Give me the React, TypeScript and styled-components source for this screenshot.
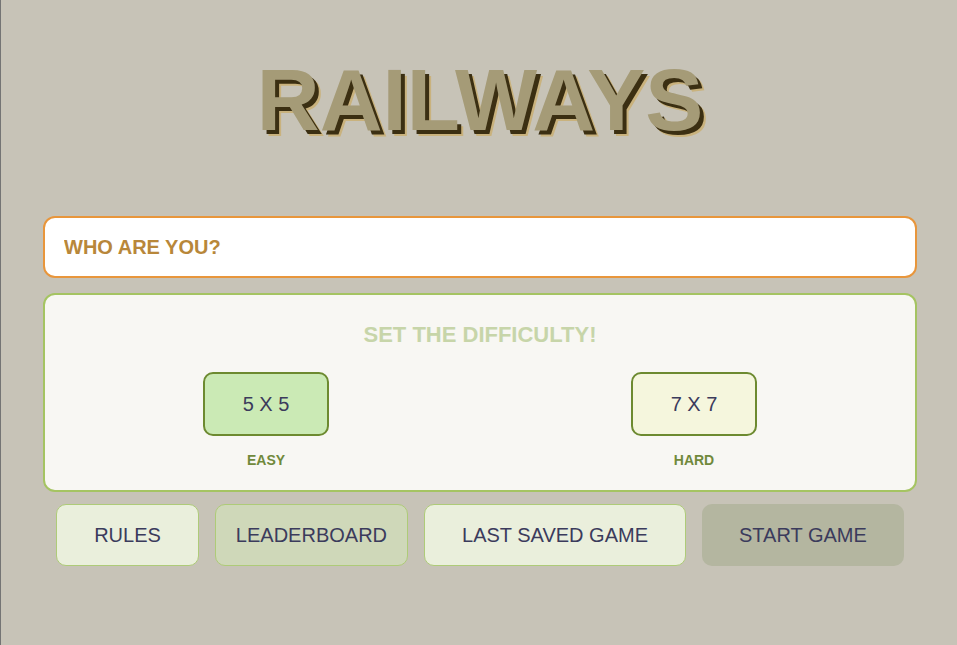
import styled, { createGlobalStyle } from "styled-components";

const GlobalStyle = createGlobalStyle`
  html, body {
    margin: 0;
    padding: 0;
    background: #c7c3b7;
  }
  * {
    box-sizing: border-box;
  }
`;

const Page = styled.div`
  min-height: 100vh;
  border-left: 1px solid #747474;
  padding: 57px 40px 0 42px;
  font-family: "Liberation Sans", Arial, sans-serif;
  display: flex;
  flex-direction: column;
`;

const Title = styled.h1`
  margin: 0;
  font-size: 87px;
  line-height: 86px;
  font-weight: 700;
  text-align: center;
  color: #a59b77;
  text-shadow: 4px 4px 0 #3b2f12, 6px 6px 0 #c9b27d;
`;

const NameInput = styled.input`
  margin-top: 73px;
  width: 100%;
  height: 62px;
  border: 2px solid #e8963c;
  border-radius: 12px;
  background: #ffffff;
  padding: 0 19px;
  font-family: inherit;
  font-size: 20px;
  font-weight: 700;
  color: #b8873a;
  outline: none;

  &::placeholder {
    color: #b8873a;
    opacity: 1;
  }
`;

const DifficultyPanel = styled.section`
  margin-top: 15px;
  border: 2px solid #a5c462;
  border-radius: 12px;
  background: #f8f7f3;
  padding: 27px 7px 22px;
  display: flex;
  flex-direction: column;
  align-items: center;
`;

const PanelTitle = styled.h2`
  margin: 0;
  font-size: 22px;
  line-height: 26px;
  font-weight: 700;
  color: #c7d5a9;
`;

const Options = styled.div`
  margin-top: 24px;
  width: 100%;
  display: flex;
  justify-content: space-around;
`;

const Option = styled.div`
  display: flex;
  flex-direction: column;
  align-items: center;
`;

const SizeButton = styled.button<{ $selected?: boolean }>`
  width: 126px;
  height: 64px;
  border: 2px solid #6d8a30;
  border-radius: 10px;
  background: ${(p) => (p.$selected ? "#cbeab5" : "#f5f6dd")};
  font-family: inherit;
  font-size: 20px;
  color: #3b3b5c;
  cursor: pointer;
`;

const OptionLabel = styled.span`
  margin-top: 16px;
  font-size: 14px;
  line-height: 16px;
  font-weight: 700;
  color: #71893b;
`;

const ActionRow = styled.div`
  margin-top: 12px;
  display: flex;
  justify-content: center;
  gap: 16px;
`;

type Variant = "plain" | "active" | "primary";

const bgFor: Record<Variant, string> = {
  plain: "#eaefdc",
  active: "#cfd8b9",
  primary: "#b4b6a0",
};

const ActionButton = styled.button<{ $variant: Variant }>`
  height: 62px;
  padding: 0 ${(p) => (p.$variant === "active" ? "20px" : "37px")};
  border: ${(p) => (p.$variant === "primary" ? "none" : "1px solid #aecb78")};
  border-radius: 10px;
  background: ${(p) => bgFor[p.$variant]};
  font-family: inherit;
  font-size: 20px;
  color: #3b3b5c;
  cursor: pointer;
`;

export default function App() {
  return (
    <>
      <GlobalStyle />
      <Page>
        <Title>RAILWAYS</Title>
        <NameInput placeholder="WHO ARE YOU?" />
        <DifficultyPanel>
          <PanelTitle>SET THE DIFFICULTY!</PanelTitle>
          <Options>
            <Option>
              <SizeButton $selected>5 X 5</SizeButton>
              <OptionLabel>EASY</OptionLabel>
            </Option>
            <Option>
              <SizeButton>7 X 7</SizeButton>
              <OptionLabel>HARD</OptionLabel>
            </Option>
          </Options>
        </DifficultyPanel>
        <ActionRow>
          <ActionButton $variant="plain">RULES</ActionButton>
          <ActionButton $variant="active">LEADERBOARD</ActionButton>
          <ActionButton $variant="plain">LAST SAVED GAME</ActionButton>
          <ActionButton $variant="primary">START GAME</ActionButton>
        </ActionRow>
      </Page>
    </>
  );
}
